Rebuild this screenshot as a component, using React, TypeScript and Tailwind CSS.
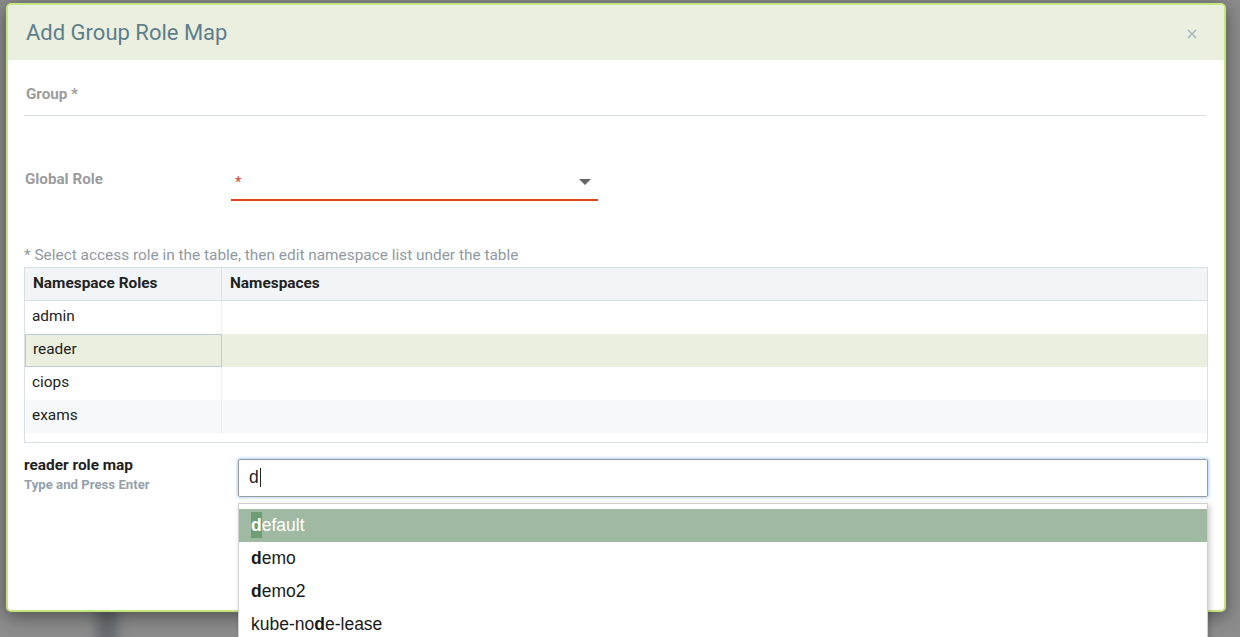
import React from "react";

const roles = ["admin", "reader", "ciops", "exams"];

const options: { label: string; hit: number }[] = [
  { label: "default", hit: 0 },
  { label: "demo", hit: 0 },
  { label: "demo2", hit: 0 },
  { label: "kube-node-lease", hit: 7 },
];

function Option({ label, hit, active }: { label: string; hit: number; active: boolean }) {
  return (
    <div
      className={`flex h-[33px] items-center px-[12px] text-[17.5px] ${
        active ? "bg-[#9fb9a2] text-white" : "bg-white text-[#1a1a1a]"
      }`}
    >
      <span>{label.slice(0, hit)}</span>
      <span className={`font-bold ${active ? "bg-[#6e9e73]" : ""}`}>{label[hit]}</span>
      <span>{label.slice(hit + 1)}</span>
    </div>
  );
}

export default function App() {
  const selected = "reader";

  return (
    <div
      className="relative h-[637px] w-[1240px] overflow-hidden bg-[#8c8c8c] pt-[3px] pl-[6px]"
      style={{ fontFamily: "Roboto, 'Liberation Sans', sans-serif" }}
    >
      {/* page content behind the overlay */}
      <div className="absolute left-[96px] top-[598px] h-[50px] w-[22px] bg-[#666b70] blur-[6px]" />

      <div className="relative h-[609px] w-[1220px] rounded-[5px] border-2 border-[#c6e57d] bg-white shadow-[0_4px_18px_rgba(0,0,0,0.45)]">
        <div className="flex h-[55px] items-center justify-between rounded-t-[3px] bg-[#eaefdf] pl-[18px] pr-[27px]">
          <h2 className="text-[22px] leading-none text-[#5e7e8b]">Add Group Role Map</h2>
          <svg width="10" height="10" viewBox="0 0 10 10" className="mt-[2px]">
            <path d="M1 1L9 9M9 1L1 9" stroke="#a7b1bb" strokeWidth="1.3" />
          </svg>
        </div>

        <div className="pl-[16px] pr-[16px]">
          <div className="mt-[25px] mr-[2px] border-b border-[#d5dfeb] pb-[12px] pl-[2px]">
            <span className="block text-[15.2px] font-bold leading-[18px] text-[#9c9c9c]">Group *</span>
          </div>

          <div className="mt-[54px] flex items-start">
            <span className="block w-[207px] pl-[1px] text-[15.2px] font-bold leading-[18px] text-[#9c9c9c]">
              Global Role
            </span>
            <div className="flex w-[367px] flex-col">
              <div className="flex h-[29px] items-start justify-between pl-[4px] pr-[7px] pt-[3px]">
                <span className="text-[15px] leading-[18px] text-[#e0401c]">*</span>
                <svg width="12" height="7" viewBox="0 0 12 7" className="mt-[6px]">
                  <path d="M0 0H12L6 6Z" fill="#666" />
                </svg>
              </div>
              <div className="h-[1.5px] bg-[#e2431d]" />
            </div>
          </div>

          <p className="mt-[45px] text-[15.4px] leading-[18px] text-[#8e99a3]">
            * Select access role in the table, then edit namespace list under the table
          </p>

          <div className="mt-[3px] border border-[#d6e0ea] pb-[9px]">
            <div className="flex h-[33px] border-b border-[#d6e0ea] bg-[#f1f5f8] text-[15.4px] font-bold text-[#222]">
              <div className="flex w-[197px] items-center border-r border-[#d6e0ea] pl-[8px]">Namespace Roles</div>
              <div className="flex flex-1 items-center pl-[8px]">Namespaces</div>
            </div>
            {roles.map((r, i) => {
              const sel = r === selected;
              return (
                <div
                  key={r}
                  className={`flex h-[33px] text-[15.4px] text-[#222] ${
                    sel ? "bg-[#ebefdf]" : i % 2 === 1 ? "bg-[#f6f8f9]" : "bg-white"
                  }`}
                >
                  <div
                    className={`flex w-[197px] items-center pl-[7px] ${
                      sel ? "border border-[#bccbd5]" : "border-r border-dotted border-[#dde4ea]"
                    }`}
                  >
                    {r}
                  </div>
                  <div className="flex-1" />
                </div>
              );
            })}
          </div>

          <div className="mt-[16px] flex items-start">
            <div className="w-[214px]">
              <div className="-mt-[3px] text-[15.4px] font-bold leading-[18px] text-[#222]">reader role map</div>
              <div className="mt-[3px] text-[13.2px] font-bold leading-[16px] text-[#95a1aa]">Type and Press Enter</div>
            </div>
            <div className="relative flex-1">
              <div className="flex h-[38px] items-center rounded-[2px] border border-[#9c9c9c] pl-[10px] shadow-[0_0_3px_1px_rgba(120,180,240,0.6)]">
                <span className="text-[17.5px] text-[#222]" style={{ fontFamily: "'Liberation Sans', Arial, sans-serif" }}>
                  d
                </span>
                <span className="ml-[1px] h-[19px] w-px bg-[#222]" />
              </div>
              <div
                className="absolute left-0 right-0 top-[44px] h-[140px] border border-[#cfcfcf] bg-white pt-[5px] shadow-[2px_2px_6px_rgba(0,0,0,0.2)]"
                style={{ fontFamily: "'Liberation Sans', Arial, sans-serif" }}
              >
                {options.map((o, i) => (
                  <Option key={o.label} label={o.label} hit={o.hit} active={i === 0} />
                ))}
              </div>
            </div>
          </div>
        </div>
      </div>
    </div>
  );
}
